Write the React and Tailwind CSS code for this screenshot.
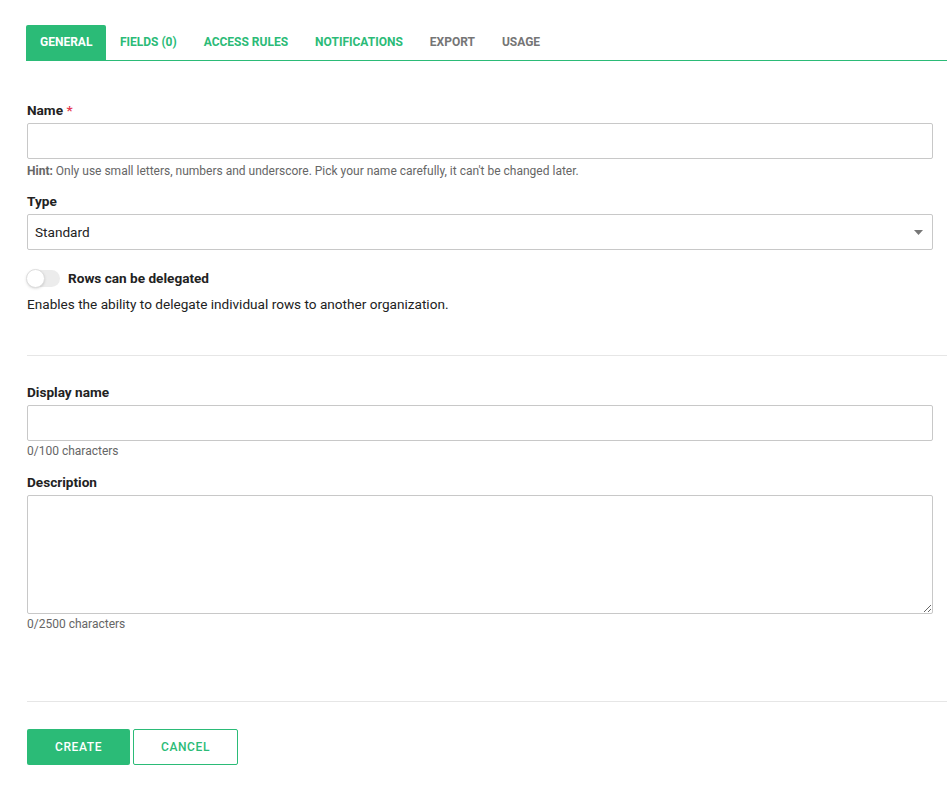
import { useState } from "react";

const tabs = [
  { label: "GENERAL", active: true },
  { label: "FIELDS (0)", color: "text-[#2bbb77]" },
  { label: "ACCESS RULES", color: "text-[#2bbb77]" },
  { label: "NOTIFICATIONS", color: "text-[#2bbb77]" },
  { label: "EXPORT", color: "text-[#757575]" },
  { label: "USAGE", color: "text-[#757575]" },
];

const App = () => {
  const [delegated, setDelegated] = useState(false);

  return (
    <div className="min-h-screen bg-white pt-[25px] text-[#222]" style={{ fontFamily: "Roboto, 'Liberation Sans', sans-serif" }}>
      {/* Tabs */}
      <div className="ml-[26px] flex h-[36px] border-b border-[#2bbb77]">
        {tabs.map((t) => (
          <div
            key={t.label}
            className={
              t.active
                ? "flex items-center rounded-t-[2px] bg-[#2bbb77] px-[14px] pb-[2px] text-[12px] font-bold text-white"
                : "flex items-center px-[13.5px] pb-[2px] text-[12px] font-bold " + t.color
            }
          >
            {t.label}
          </div>
        ))}
      </div>

      <div className="pl-[27px] pt-[40px]">
        <div className="pr-[14px]">
          <label className="block text-[13.6px] font-bold leading-[18px]">
            Name <span className="text-[#e53950]">*</span>
          </label>
          <input className="mt-[4px] block h-[36px] w-full rounded-[2px] border border-[#c8c8c8] px-[7px] text-[13.6px] outline-none" />
          <p className="mt-[4px] text-[12px] leading-[16px] text-[#666]">
            <span className="font-bold">Hint:</span> Only use small letters, numbers and underscore. Pick your name carefully, it can't be changed later.
          </p>

          <label className="mt-[13px] block text-[13.6px] font-bold leading-[18px]">Type</label>
          <div className="mt-[4px] flex h-[36px] w-full items-center justify-between rounded-[2px] border border-[#c8c8c8] pl-[7px] pr-[9px] text-[13.6px]">
            <span>Standard</span>
            <svg width="9" height="5" viewBox="0 0 9 5">
              <path d="M0 0h9L4.5 5z" fill="#777" />
            </svg>
          </div>

          <div className="mt-[18px] flex h-[20px] items-center gap-[8px]">
            <button
              onClick={() => setDelegated(!delegated)}
              className={"relative h-[17px] w-[33px] rounded-full " + (delegated ? "bg-[#9fe0c0]" : "bg-[#ececec]")}
            >
              <span
                className={
                  "absolute top-[-1px] h-[19px] w-[19px] rounded-full border border-[#ddd] shadow-sm " +
                  (delegated ? "left-[15px] bg-[#2bbb77]" : "left-[-1px] bg-white")
                }
              />
            </button>
            <span className="text-[13.6px] font-bold">Rows can be delegated</span>
          </div>
          <p className="mt-[7px] text-[13.6px] leading-[18px]">Enables the ability to delegate individual rows to another organization.</p>
        </div>

        <div className="mt-[42px] border-t border-[#e6e6e6]" />

        <div className="pr-[14px] pt-[27px]">
          <label className="block text-[13.6px] font-bold leading-[18px]">Display name</label>
          <input className="mt-[4px] block h-[36px] w-full rounded-[2px] border border-[#c8c8c8] px-[7px] text-[13.6px] outline-none" />
          <p className="mt-[2px] text-[12px] leading-[16px] text-[#666]">0/100 characters</p>

          <label className="mt-[14px] block text-[13.6px] font-bold leading-[18px]">Description</label>
          <textarea className="mt-[4px] block h-[119px] w-full rounded-[2px] border border-[#c8c8c8] px-[7px] text-[13.6px] outline-none" />
          <p className="mt-[2px] text-[12px] leading-[16px] text-[#666]">0/2500 characters</p>
        </div>

        <div className="mt-[69px] border-t border-[#e6e6e6]" />

        <div className="flex gap-[3px] pt-[27px]">
          <button className="h-[36px] w-[103px] rounded-[2px] bg-[#2bbb77] text-[12px] font-medium tracking-[0.6px] text-white">CREATE</button>
          <button className="h-[36px] w-[105px] rounded-[2px] border border-[#2bbb77] bg-white text-[12px] font-medium tracking-[0.6px] text-[#2bbb77]">CANCEL</button>
        </div>
      </div>
    </div>
  );
};

export default App;
